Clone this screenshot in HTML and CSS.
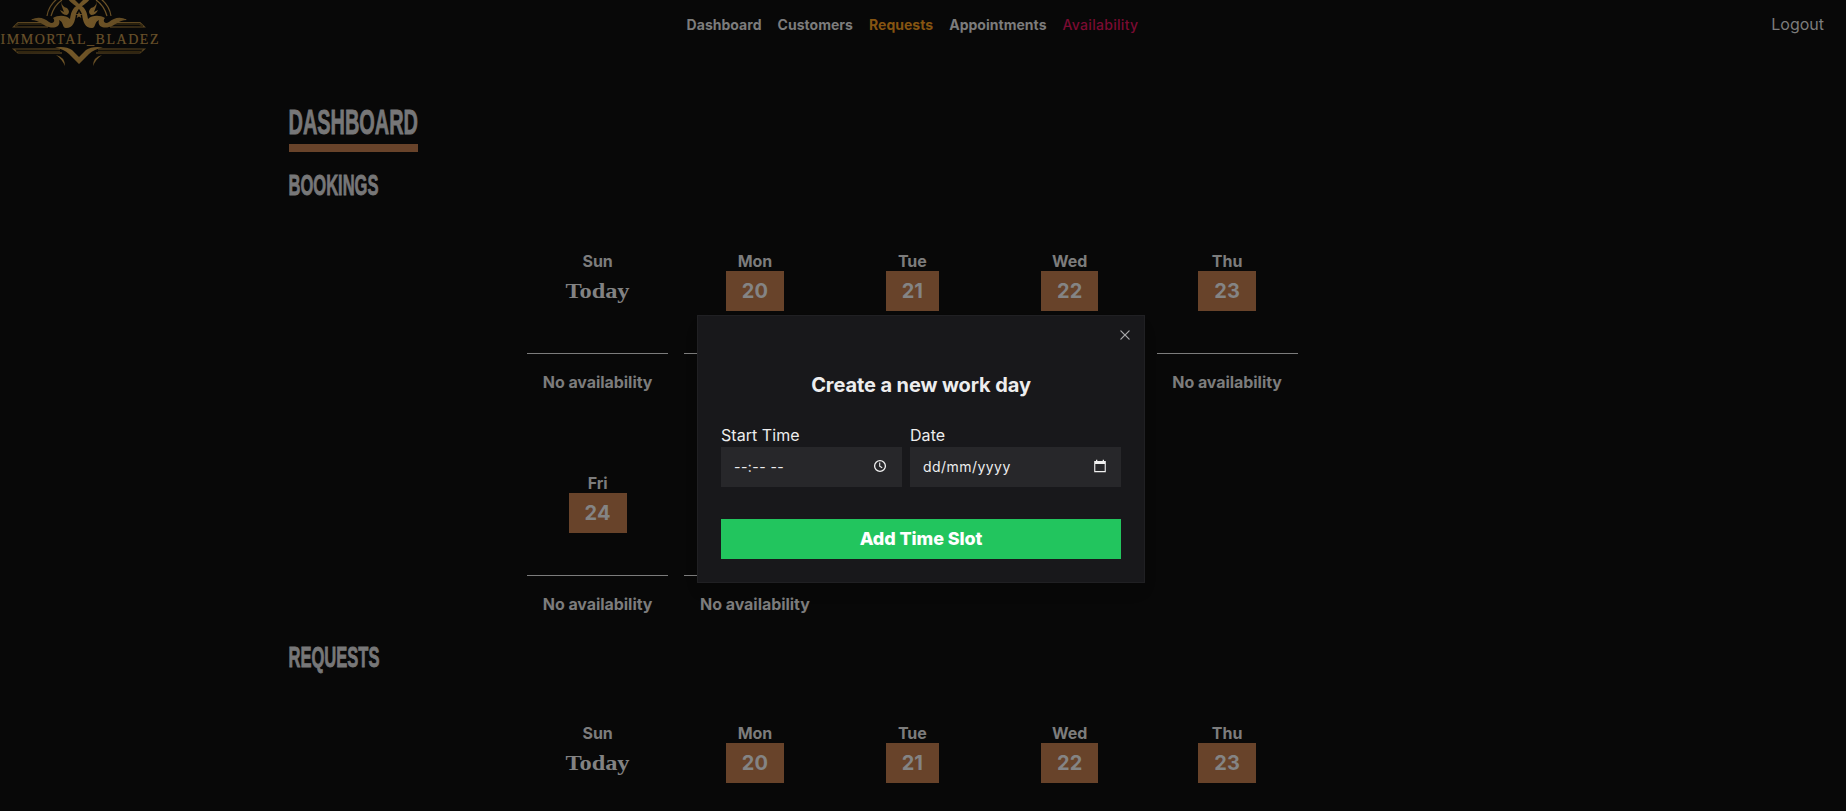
FILE: index.html
```html
<!DOCTYPE html>
<html lang="en">
<head>
<meta charset="utf-8">
<title>Dashboard</title>
<link rel="stylesheet" href="styles.css">
</head>
<body>
<header class="topbar">
  <svg class="logo" viewBox="0 0 160 70" width="160" height="70" role="img" aria-label="Immortal Bladez">
    <defs><linearGradient id="gold" x1="0" x2="160" y1="0" y2="60" gradientUnits="userSpaceOnUse"><stop offset="0" stop-color="#4d3b1c"/><stop offset=".5" stop-color="#735728"/><stop offset="1" stop-color="#4d3b1c"/></linearGradient></defs>
    <g fill="none" stroke="url(#gold)" stroke-width="1.200">
      <path d="M47 16C48 9 52 3 57 -1M51 16C53 9 56 4 62 0M111 16C110 9 106 3 101 -1M107 16C105 9 102 4 96 0"/>
      <path d="M47 22.500H18L13.500 27H48M38 19.500H32M111 22.500H140L144.500 27H110M120 19.500H126"/>
      <path d="M60 49H13.500L18 53H62M98 49H144.500L140 53H96"/>
    </g>
    <path d="M15 26L19 24H46M143 26L139 24H112M16 51.500H60M142 51.500H98" fill="none" stroke="#33270f" stroke-width="1.500"/>
    <g fill="url(#gold)">
      <path d="M31 20C38 16 44 18 49 22C53 25 56 21 53 18C58 15 66 15 70 19C71 13 72 8 78 5L84 -1H90C86 5 79 6 76 14C75 22 73 28 66 28C62 28 64 22 59 20C61 26 55 29 49 27C43 26 40 20 31 20Z"/>
      <path d="M127 20C120 16 114 18 109 22C105 25 102 21 105 18C100 15 92 15 88 19C87 13 86 8 80 5L74 -1H68C72 5 79 6 82 14C83 22 85 28 92 28C96 28 94 22 99 20C97 26 103 29 109 27C115 26 118 20 127 20Z"/>
      <path d="M61 1Q62 7 67 8Q71 12 67 15Q62 15 60 10L64 12Q61 6 61 1M97 1Q96 7 91 8Q87 12 91 15Q96 15 98 10L94 12Q97 6 97 1"/>
      <path d="M79 11.500L80 14H82.500L80.500 15.500L81.300 18L79 16.500L76.700 18L77.500 15.500L75.500 14H78Z"/>
      <path d="M55 47.500Q66 46 72 50L79 57L86 50Q92 46 103 47.500Q94 49 89 54L79 64L69 54Q64 49 55 47.500M56 55Q65 57 65 66Q62 59 56 55M102 55Q93 57 93 66Q96 59 102 55"/>
    </g>
    <text class="logo-text" x="0.500" y="43.500" textLength="158" lengthAdjust="spacing">IMMORTAL_BLADEZ</text>
  </svg>
  <nav class="nav">
    <a>Dashboard</a><a>Customers</a><a class="amber">Requests</a><a>Appointments</a><a class="rose">Availability</a>
  </nav>
  <a class="logout">Logout</a>
</header>
<main class="page">
  <h1 class="title"><svg width="129" height="36"><text class="t1" x="-0.500" y="28" textLength="129.500" lengthAdjust="spacingAndGlyphs">DASHBOARD</text></svg></h1>
  <h2 class="section bookings"><svg width="92" height="36"><text class="t2" x="-0.500" y="23.500" textLength="90" lengthAdjust="spacingAndGlyphs">BOOKINGS</text></svg></h2>
  <div class="calendar">
    <div class="day"><span class="name">Sun</span><span class="today"><svg width="66" height="40"><text class="tt" x="0.500" y="27" textLength="64" lengthAdjust="spacingAndGlyphs">Today</text></svg></span><p class="slots">No availability</p></div>
    <div class="day"><span class="name">Mon</span><span class="date">20</span><p class="slots"></p></div>
    <div class="day"><span class="name">Tue</span><span class="date">21</span><p class="slots"></p></div>
    <div class="day"><span class="name">Wed</span><span class="date">22</span><p class="slots"></p></div>
    <div class="day"><span class="name">Thu</span><span class="date">23</span><p class="slots">No availability</p></div>
    <div class="day"><span class="name">Fri</span><span class="date">24</span><p class="slots">No availability</p></div>
    <div class="day"><span class="name"></span><span class="date"></span><p class="slots">No availability</p></div>
  </div>
  <h2 class="section requests"><svg width="92" height="36"><text class="t2" x="-0.500" y="23.500" textLength="91" lengthAdjust="spacingAndGlyphs">REQUESTS</text></svg></h2>
  <div class="calendar">
    <div class="day"><span class="name">Sun</span><span class="today"><svg width="66" height="40"><text class="tt" x="0.500" y="27" textLength="64" lengthAdjust="spacingAndGlyphs">Today</text></svg></span></div>
    <div class="day"><span class="name">Mon</span><span class="date">20</span></div>
    <div class="day"><span class="name">Tue</span><span class="date">21</span></div>
    <div class="day"><span class="name">Wed</span><span class="date">22</span></div>
    <div class="day"><span class="name">Thu</span><span class="date">23</span></div>
  </div>
</main>
<div class="modal" role="dialog">
  <svg class="close" width="16" height="16" viewBox="0 0 15 15" fill="#a9a9ab"><path d="M11.782 4.032a.575.575 0 0 0-.813-.813L7.500 6.687 4.032 3.219a.575.575 0 0 0-.814.813L6.687 7.500l-3.469 3.468a.575.575 0 0 0 .814.814L7.500 8.313l3.469 3.469a.575.575 0 0 0 .813-.814L8.313 7.500z"/></svg>
  <h2 class="modal-title">Create a new work day</h2>
  <div class="fields">
    <div class="field time"><span class="label">Start Time</span>
      <div class="input"><span class="value">--:-- --</span><svg width="14" height="14" viewBox="0 0 14 14" fill="none" stroke="#f0f0f0" stroke-width="1.300"><circle cx="7" cy="7" r="5.400"/><path d="M6.700 3.500V7.200L9.200 8.800" stroke-width="1.100"/></svg></div></div>
    <div class="field date-field"><span class="label">Date</span>
      <div class="input"><span class="value">dd/mm/yyyy</span><svg width="14" height="14" viewBox="0 0 14 14" fill="#f0f0f0"><path d="M1.200 2H3V.8H4.300V2H9.700V.8H11V2H12.800V13.200H1.200ZM2.300 5V12.100H11.700V5Z" fill-rule="evenodd"/></svg></div></div>
  </div>
  <button class="submit">Add Time Slot</button>
</div>
</body>
</html>
```
FILE: styles.css
```css
* { box-sizing: border-box; margin: 0; padding: 0; }
body { height: 811px; overflow: hidden; background: #080808; color: #7c7c7c; font: 16px/24px Inter, sans-serif; }
.topbar { display: grid; grid-template-columns: 1fr auto 1fr; height: 72px; }
.logo { display: block; }
.logo-text { font: 14px "Liberation Serif", serif; fill: #69512a; stroke: #69512a; stroke-width: .2px; }
.nav { display: flex; gap: 16px; padding-top: 13px; margin-right: 21px; font-size: 14px; font-weight: 700; letter-spacing: .03px; }
.amber { color: #855411; }
.rose { color: #7b0b32; font-weight: 500; letter-spacing: .3px; }
.logout { justify-self: end; padding: 12px 22px 0 0; }
.page { height: 739px; overflow: hidden; padding: 34px 288px 0; }
.title { width: 129px; height: 46px; border-bottom: 8px solid #68432a; margin-left: 1px; }
.title svg, .section svg, .today svg { display: block; overflow: visible; }
.t1, .t2 { font-family: "Liberation Sans Narrow", "Liberation Sans", sans-serif; font-weight: 700; fill: #777778; stroke: #777778; stroke-width: .9px; }
.t1 { font-size: 35.500px; }
.t2 { font-size: 29.500px; }
.section { height: 30px; padding-left: 1px; }
.bookings { margin-top: 19px; }
.calendar { display: grid; grid-template-columns: repeat(5, 141.200px); column-gap: 16.200px; margin: 48px 0 0 239px; }
.day { display: flex; flex-direction: column; align-items: center; height: 222px; font-weight: 700; letter-spacing: -.05px; }
.name { height: 22px; line-height: 24px; }
.date { height: 40px; padding: 0 16px; background: #68432a; color: #848484; font-size: 20px; line-height: 40px; letter-spacing: .1px; }
.date:empty { visibility: hidden; }
.today { height: 40px; }
.tt { font: 700 21.500px "Liberation Serif", serif; fill: #828282; }
.slots { align-self: stretch; margin-top: 42px; padding-top: 16px; border-top: 1px solid #7c7c7c; text-align: center; }
.requests { margin-top: -50px; position: relative; }
.modal { position: absolute; left: 697px; top: 315px; width: 448px; height: 268px; padding: 55px 23px 23px; border: 1px solid #202023; background: #18181b; box-shadow: 0 10px 15px -3px rgb(0 0 0 / .1); color: #ededee; }
.close { position: absolute; right: 11px; top: 11px; }
.modal-title { height: 28px; font-size: 20px; line-height: 28px; font-weight: 700; letter-spacing: -.1px; text-align: center; }
.fields { display: flex; gap: 8px; margin-top: 24px; }
.time { width: 181px; }
.date-field { width: 211px; }
.label { display: block; height: 24px; letter-spacing: .05px; }
.input { display: flex; justify-content: space-between; align-items: center; height: 40px; padding: 0 15px 0 13px; background: #27272a; font-size: 14px; letter-spacing: .45px; }
.date-field .input { padding-right: 14px; }
.input svg { margin-bottom: 2px; }
.submit { display: block; width: 100%; height: 40px; margin-top: 32px; border: 0; background: #22c55e; color: #fff; font: 800 18px/40px Inter, sans-serif; letter-spacing: -.1px; }
```
